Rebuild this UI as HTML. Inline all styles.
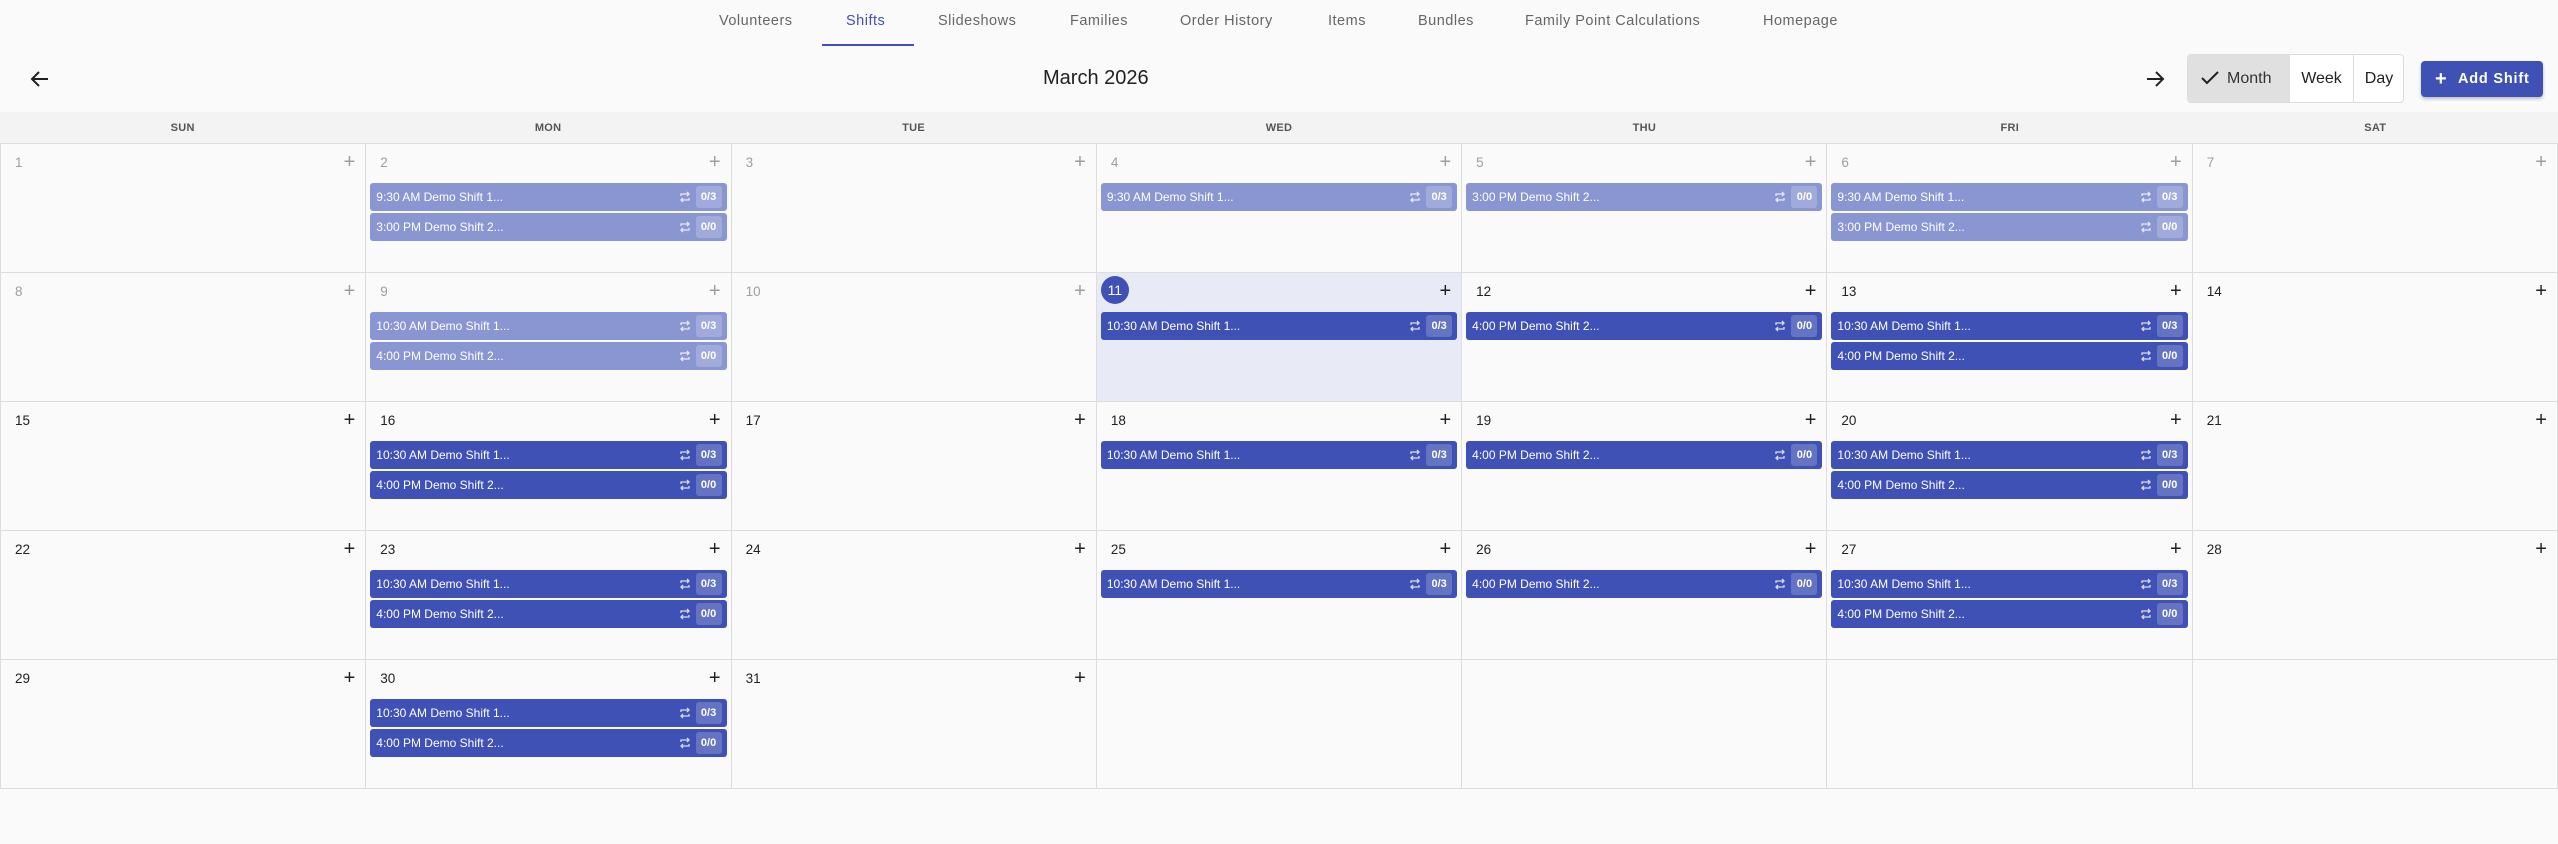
<!DOCTYPE html>
<html><head><meta charset="utf-8"><style>
*{box-sizing:border-box;margin:0;padding:0}
body{width:2558px;height:844px;background:#fafafa;font-family:"Liberation Sans",sans-serif;position:relative;overflow:hidden;color:#212121}
.tab{position:absolute;top:13px;font-size:14.5px;color:#666;letter-spacing:.5px;white-space:nowrap}
.tab.a{color:#3f51b5}
.ul{position:absolute;left:822px;top:44px;width:92px;height:2px;background:#3f51b5}
.title{position:absolute;left:1043px;top:67px;font-size:20px;color:#212121}
.hdr{position:absolute;left:0;top:112px;width:2558px;height:32px;background:#f3f3f3;display:grid;grid-template-columns:repeat(7,1fr);border-bottom:1px solid #ddd}
.hdr div{text-align:center;font-size:11px;font-weight:bold;color:#555;line-height:32px;letter-spacing:.3px}
.grid{position:absolute;left:0;top:144px;width:2558px;display:grid;grid-template-columns:repeat(7,1fr);grid-auto-rows:129px;border-left:1px solid #ddd}
.c{border-right:1px solid #ddd;border-bottom:1px solid #ddd;position:relative}
.c.t{background:#e8eaf6}
.n{position:absolute;left:14px;top:11px;font-size:13.5px;color:#212121}
.c.p .n{color:#9e9e9e}
.pl{position:absolute;right:10px;top:8px;font-size:20px;color:#212121;line-height:20px}
.c.p .pl{color:#9e9e9e}
.circ{position:absolute;left:4px;top:3px;width:28px;height:28px;border-radius:50%;background:#3f51b5;color:#fff;font-size:14px;text-align:center;line-height:28px}
.ev{position:absolute;left:4px;right:4px;height:28px;background:#3f51b5;border-radius:3px;color:#fff;font-size:12px;line-height:28px;padding-left:6px}
.ev.p{background:#8a96d2}
.ev.e1{top:39px}.ev.e2{top:69px}
.ev svg{position:absolute;right:36px;top:8px}
.ev b{position:absolute;right:5px;top:3px;width:26px;height:22px;line-height:22px;text-align:center;background:rgba(255,255,255,.2);border-radius:3px;font-size:11px}
.grp{position:absolute;left:2187px;top:54px;width:217px;height:49px;border:1px solid #ddd;border-radius:4px;background:#fff;overflow:hidden;font-size:16px}
.grp div{position:absolute;top:0;height:47px;line-height:47px}
.add{position:absolute;left:2421px;top:61px;width:122px;height:36px;background:#3f51b5;border-radius:4px;color:#fff;font-size:14.5px;font-weight:bold;letter-spacing:.8px;line-height:36px;box-shadow:0 2px 3px rgba(0,0,0,.25)}
</style></head><body>
<div class="tab" style="left:719px">Volunteers</div>
<div class="tab a" style="left:846px">Shifts</div>
<div class="tab" style="left:938px">Slideshows</div>
<div class="tab" style="left:1070px">Families</div>
<div class="tab" style="left:1180px">Order History</div>
<div class="tab" style="left:1328px">Items</div>
<div class="tab" style="left:1418px">Bundles</div>
<div class="tab" style="left:1525px">Family Point Calculations</div>
<div class="tab" style="left:1763px">Homepage</div>
<div class="ul"></div>
<svg style="position:absolute;left:30px;top:70px" width="20" height="18" viewBox="0 0 20 18"><path d="M18 9H3M9 2L2 9l7 7" fill="none" stroke="#212121" stroke-width="2"/></svg>
<div class="title">March 2026</div>
<svg style="position:absolute;left:2145px;top:70px" width="20" height="18" viewBox="0 0 20 18"><path d="M2 9h15M11 2l7 7-7 7" fill="none" stroke="#212121" stroke-width="2"/></svg>
<div class="grp">
<div style="left:0;width:102px;background:#e0e0e0;border-right:1px solid #ddd"><svg style="position:absolute;left:13px;top:16px" width="18" height="14" viewBox="0 0 18 14"><path d="M1 7l5 5L17 1" fill="none" stroke="#212121" stroke-width="2"/></svg><span style="position:absolute;left:39px;color:#333">Month</span></div>
<div style="left:102px;width:64px;border-right:1px solid #ddd;text-align:center">Week</div>
<div style="left:166px;width:50px;text-align:center">Day</div>
</div>
<div class="add"><span style="position:absolute;left:14px;font-size:20px">+</span><span style="position:absolute;left:37px">Add Shift</span></div>
<div class="hdr"><div>SUN</div><div>MON</div><div>TUE</div><div>WED</div><div>THU</div><div>FRI</div><div>SAT</div></div>
<svg width="0" height="0" style="position:absolute"><defs><symbol id="rp" viewBox="0 0 12 12"><path d="M2 5V3h8M8 1l2 2-2 2M10 7v2H2M4 11L2 9l2-2" fill="none" stroke="#fff" stroke-opacity=".8" stroke-width="1.3"/></symbol></defs></svg>
<div class="grid">
<div class="c p"><span class="n">1</span><span class="pl">+</span></div>
<div class="c p"><span class="n">2</span><span class="pl">+</span><div class="ev p e1">9:30 AM Demo Shift 1...<svg width="12" height="12"><use href="#rp"/></svg><b>0/3</b></div><div class="ev p e2">3:00 PM Demo Shift 2...<svg width="12" height="12"><use href="#rp"/></svg><b>0/0</b></div></div>
<div class="c p"><span class="n">3</span><span class="pl">+</span></div>
<div class="c p"><span class="n">4</span><span class="pl">+</span><div class="ev p e1">9:30 AM Demo Shift 1...<svg width="12" height="12"><use href="#rp"/></svg><b>0/3</b></div></div>
<div class="c p"><span class="n">5</span><span class="pl">+</span><div class="ev p e1">3:00 PM Demo Shift 2...<svg width="12" height="12"><use href="#rp"/></svg><b>0/0</b></div></div>
<div class="c p"><span class="n">6</span><span class="pl">+</span><div class="ev p e1">9:30 AM Demo Shift 1...<svg width="12" height="12"><use href="#rp"/></svg><b>0/3</b></div><div class="ev p e2">3:00 PM Demo Shift 2...<svg width="12" height="12"><use href="#rp"/></svg><b>0/0</b></div></div>
<div class="c p"><span class="n">7</span><span class="pl">+</span></div>

<div class="c p"><span class="n">8</span><span class="pl">+</span></div>
<div class="c p"><span class="n">9</span><span class="pl">+</span><div class="ev p e1">10:30 AM Demo Shift 1...<svg width="12" height="12"><use href="#rp"/></svg><b>0/3</b></div><div class="ev p e2">4:00 PM Demo Shift 2...<svg width="12" height="12"><use href="#rp"/></svg><b>0/0</b></div></div>
<div class="c p"><span class="n">10</span><span class="pl">+</span></div>
<div class="c t"><span class="circ">11</span><span class="pl">+</span><div class="ev e1">10:30 AM Demo Shift 1...<svg width="12" height="12"><use href="#rp"/></svg><b>0/3</b></div></div>
<div class="c"><span class="n">12</span><span class="pl">+</span><div class="ev e1">4:00 PM Demo Shift 2...<svg width="12" height="12"><use href="#rp"/></svg><b>0/0</b></div></div>
<div class="c"><span class="n">13</span><span class="pl">+</span><div class="ev e1">10:30 AM Demo Shift 1...<svg width="12" height="12"><use href="#rp"/></svg><b>0/3</b></div><div class="ev e2">4:00 PM Demo Shift 2...<svg width="12" height="12"><use href="#rp"/></svg><b>0/0</b></div></div>
<div class="c"><span class="n">14</span><span class="pl">+</span></div>

<div class="c"><span class="n">15</span><span class="pl">+</span></div>
<div class="c"><span class="n">16</span><span class="pl">+</span><div class="ev e1">10:30 AM Demo Shift 1...<svg width="12" height="12"><use href="#rp"/></svg><b>0/3</b></div><div class="ev e2">4:00 PM Demo Shift 2...<svg width="12" height="12"><use href="#rp"/></svg><b>0/0</b></div></div>
<div class="c"><span class="n">17</span><span class="pl">+</span></div>
<div class="c"><span class="n">18</span><span class="pl">+</span><div class="ev e1">10:30 AM Demo Shift 1...<svg width="12" height="12"><use href="#rp"/></svg><b>0/3</b></div></div>
<div class="c"><span class="n">19</span><span class="pl">+</span><div class="ev e1">4:00 PM Demo Shift 2...<svg width="12" height="12"><use href="#rp"/></svg><b>0/0</b></div></div>
<div class="c"><span class="n">20</span><span class="pl">+</span><div class="ev e1">10:30 AM Demo Shift 1...<svg width="12" height="12"><use href="#rp"/></svg><b>0/3</b></div><div class="ev e2">4:00 PM Demo Shift 2...<svg width="12" height="12"><use href="#rp"/></svg><b>0/0</b></div></div>
<div class="c"><span class="n">21</span><span class="pl">+</span></div>

<div class="c"><span class="n">22</span><span class="pl">+</span></div>
<div class="c"><span class="n">23</span><span class="pl">+</span><div class="ev e1">10:30 AM Demo Shift 1...<svg width="12" height="12"><use href="#rp"/></svg><b>0/3</b></div><div class="ev e2">4:00 PM Demo Shift 2...<svg width="12" height="12"><use href="#rp"/></svg><b>0/0</b></div></div>
<div class="c"><span class="n">24</span><span class="pl">+</span></div>
<div class="c"><span class="n">25</span><span class="pl">+</span><div class="ev e1">10:30 AM Demo Shift 1...<svg width="12" height="12"><use href="#rp"/></svg><b>0/3</b></div></div>
<div class="c"><span class="n">26</span><span class="pl">+</span><div class="ev e1">4:00 PM Demo Shift 2...<svg width="12" height="12"><use href="#rp"/></svg><b>0/0</b></div></div>
<div class="c"><span class="n">27</span><span class="pl">+</span><div class="ev e1">10:30 AM Demo Shift 1...<svg width="12" height="12"><use href="#rp"/></svg><b>0/3</b></div><div class="ev e2">4:00 PM Demo Shift 2...<svg width="12" height="12"><use href="#rp"/></svg><b>0/0</b></div></div>
<div class="c"><span class="n">28</span><span class="pl">+</span></div>

<div class="c"><span class="n">29</span><span class="pl">+</span></div>
<div class="c"><span class="n">30</span><span class="pl">+</span><div class="ev e1">10:30 AM Demo Shift 1...<svg width="12" height="12"><use href="#rp"/></svg><b>0/3</b></div><div class="ev e2">4:00 PM Demo Shift 2...<svg width="12" height="12"><use href="#rp"/></svg><b>0/0</b></div></div>
<div class="c"><span class="n">31</span><span class="pl">+</span></div>
<div class="c"></div><div class="c"></div><div class="c"></div><div class="c"></div>
</div>
</body></html>
